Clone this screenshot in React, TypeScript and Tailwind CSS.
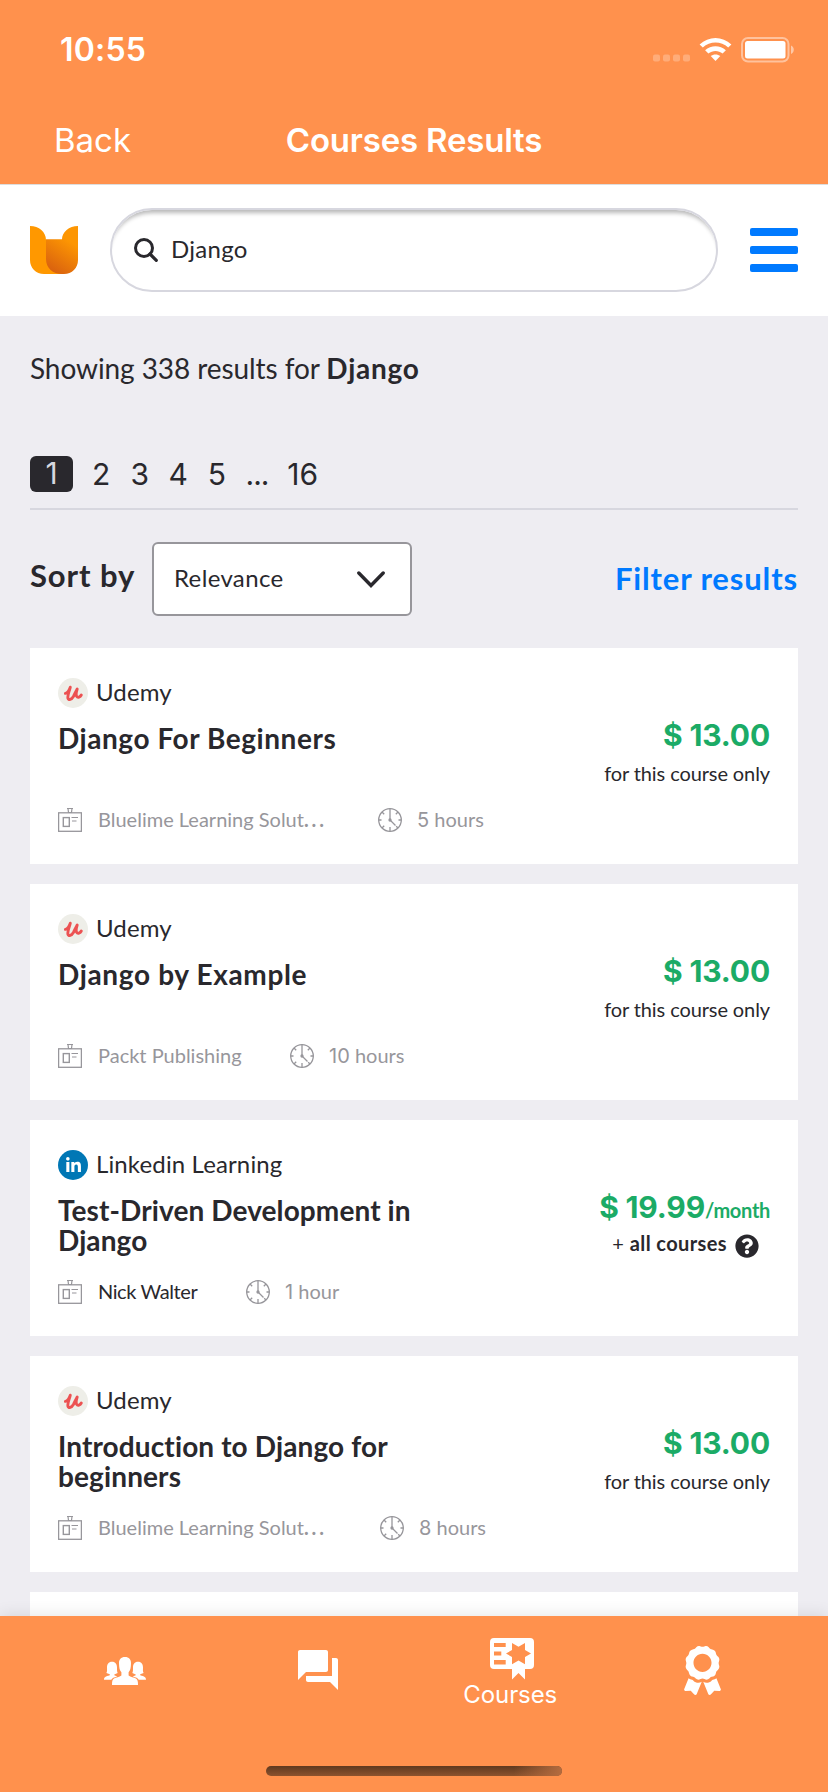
import React from "react";
import { FaAward, FaLinkedinIn, FaQuestionCircle } from "react-icons/fa";
import { MdQuestionAnswer } from "react-icons/md";

type Course = {
  provider: "Udemy" | "Linkedin Learning";
  title: string;
  titleClass: string;
  author: string;
  authorClass: string;
  truncated?: boolean;
  amount: string;
  unit: string;
  price: string;
  monthly?: boolean;
};

const courses: Course[] = [
  {
    provider: "Udemy",
    title: "Django For Beginners",
    titleClass: "tracking-[0.550px]",
    author: "Bluelime Learning Solut",
    authorClass: "w-[296px] text-[#97969b]",
    truncated: true,
    amount: "5",
    unit: "hours",
    price: "$ 13.00",
  },
  {
    provider: "Udemy",
    title: "Django by Example",
    titleClass: "tracking-[0.650px]",
    author: "Packt Publishing",
    authorClass: "w-[208px] text-[#97969b]",
    amount: "10",
    unit: "hours",
    price: "$ 13.00",
  },
  {
    provider: "Linkedin Learning",
    title: "Test-Driven Development in Django",
    titleClass: "tracking-[0.1px]",
    author: "Nick Walter",
    authorClass: "w-[164px] tracking-[-0.400px] text-[#29282d]",
    amount: "1",
    unit: "hour",
    price: "$ 19.99",
    monthly: true,
  },
  {
    provider: "Udemy",
    title: "Introduction to Django for beginners",
    titleClass: "tracking-[0.120px]",
    author: "Bluelime Learning Solut",
    authorClass: "w-[298px] text-[#97969b]",
    truncated: true,
    amount: "8",
    unit: "hours",
    price: "$ 13.00",
  },
];

function StatusIcons() {
  return (
    <svg width="142" height="26" viewBox="0 0 142 26" fill="none">
      <g fill="#fff" fillOpacity="0.25">
        <rect x="0" y="17.5" width="7" height="7" rx="2" />
        <rect x="10" y="17.5" width="7" height="7" rx="2" />
        <rect x="20" y="17.5" width="7" height="7" rx="2" />
        <rect x="30" y="17.5" width="7" height="7" rx="2" />
      </g>
      <path d="M46.600 7.500C55.500-1.200 69.500-1.200 78.400 7.500L75.200 10.600C68.100 3.900 56.900 3.900 49.800 10.600Z" fill="#fff" />
      <path d="M52.100 13.300C58 7.900 67 7.900 72.900 13.300L69.600 16.600C65.600 13.100 59.400 13.100 55.400 16.600Z" fill="#fff" />
      <path d="M57.700 19.100C60.400 16.800 64.600 16.800 67.300 19.100L62.500 24Z" fill="#fff" />
      <rect x="89" y="1" width="46.500" height="23.500" rx="6" stroke="#fff" strokeOpacity="0.45" strokeWidth="2" />
      <rect x="92" y="4" width="40.500" height="17.500" rx="2.500" fill="#fff" />
      <path d="M138 8.500C141.700 10 141.700 15.500 138 17Z" fill="#fff" fillOpacity="0.5" />
    </svg>
  );
}

function Logo() {
  return (
    <svg width="48" height="48" viewBox="0 0 48 48">
      <defs>
        <linearGradient id="cup" x1="20" y1="44" x2="42" y2="12" gradientUnits="userSpaceOnUse">
          <stop offset="0" stopColor="#d9610f" />
          <stop offset="0.9" stopColor="#fd9602" />
        </linearGradient>
      </defs>
      <path d="M0 0C9 0 16 6 16 14L34 48H14C6 48 0 42 0 34Z" fill="#ff9800" />
      <path d="M16 13.300H32C32 6 39 0 48 0V34C48 42 42 48 34 48H32C23 48 16 42 16 33Z" fill="url(#cup)" />
    </svg>
  );
}

function SearchIcon() {
  return (
    <svg width="24" height="24" viewBox="0 0 24 24" fill="none" stroke="#29282d">
      <circle cx="10" cy="10" r="8.500" strokeWidth="3" />
      <path d="M16 16L22.300 22.300" strokeWidth="3.200" strokeLinecap="round" />
    </svg>
  );
}

function UdemyMark() {
  return (
    <svg width="30" height="30" viewBox="0 0 30 30" fill="none">
      <circle cx="15" cy="15" r="15" fill="#eeeee8" />
      <path
        d="M7.400 15.400C9.600 15 11.200 12.200 12.300 9.200C11.400 13.200 9.400 17.200 9.900 20.200C10.400 22.600 13.600 21.600 15.400 18.500C16.700 16 17.800 13.500 19.200 11C18.300 13.800 17.700 16.500 18.600 18.300C19.700 20 22.300 19 23.300 17"
        stroke="#ec5252"
        strokeWidth="2.900"
        strokeLinecap="round"
        strokeLinejoin="round"
      />
    </svg>
  );
}

function LinkedinMark() {
  return (
    <span className="flex h-[30px] w-[30px] items-center justify-center rounded-full bg-[#0077b5] text-white">
      <FaLinkedinIn size={17} />
    </span>
  );
}

function BadgeIcon() {
  return (
    <svg width="24" height="24" viewBox="0 0 24 24" fill="none" stroke="#97969b">
      <rect x="0.600" y="4.800" width="22.800" height="18.500" strokeWidth="1.300" />
      <path d="M9 0.500H15M10 0.500L10.500 4.500H13.500L14 0.500" strokeWidth="1.200" />
      <rect x="5.300" y="9.600" width="6" height="8.800" strokeWidth="1.400" />
      <path d="M13.500 9.500H20M14 13H18.500" strokeWidth="1.200" />
    </svg>
  );
}

function ClockIcon() {
  return (
    <svg width="24" height="24" viewBox="0 0 24 24" fill="none" stroke="#97969b" strokeWidth="1.300">
      <circle cx="12" cy="12" r="11.300" />
      <path d="M12 0.500V12L17.500 17.500M12 19V23.500M0.500 12H3.500M20.500 12H23.500M4 4L6.200 6.200M20 4L17.800 6.200M4 20L6.200 17.800M20 20L18.200 18.200" />
      <circle cx="12" cy="12" r="1" fill="#97969b" />
    </svg>
  );
}

function PeopleIcon() {
  return (
    <svg width="42" height="28" viewBox="0 0 42 28" fill="#fff">
      <path d="M21 0C25 0 27.200 2.500 27 6.500C26.900 11 26.300 13.500 24.600 15.300V18.500C26.500 20.300 30 20.300 32 21.600C33.600 22.600 34 24.500 34 28H8C8 24.500 8.400 22.600 10 21.600C12 20.300 15.500 20.300 17.400 18.500V15.300C15.700 13.500 15.100 11 15 6.500C14.800 2.500 17 0 21 0Z" />
      <path d="M8 4.800C11.500 4.800 13 7.500 13 10.500C13 13 13 14.800 13.700 16L10.300 17.400V18.300L13.200 19.400C10 20.300 8 21 7.300 22.800H0C0 20 1.500 19.400 5.800 18.200V17.300L2.400 16C3.300 14.500 3 13 3 10.500C3 7.500 4.500 4.800 8 4.800Z" />
      <path d="M34 4.800C37.500 4.800 39 7.500 39 10.500C39 13 38.700 14.500 39.600 16L36.200 17.300V18.200C40.500 19.400 42 20 42 22.800H34.700C34 21 32 20.300 28.800 19.400L31.700 18.300V17.400L28.300 16C29 14.800 29 13 29 10.500C29 7.500 30.500 4.800 34 4.800Z" />
    </svg>
  );
}

function CertificateIcon() {
  return (
    <svg width="44" height="42" viewBox="0 0 44 42" fill="#fff" fillRule="evenodd">
      <path d="M4 0H40Q44 0 44 4V27Q44 31 40 31H35V41.500L28.500 35L22 41.500V31H4Q0 31 0 27V4Q0 0 4 0ZM4 5V9H15.700V5ZM4 13.500V17.500H11.300V13.500ZM4 22V26.500H15.700V22ZM22 5V12L16 15.500L22 19V26.300L28.500 22.500L35 26.300V19L41 15.500L35 12V5L28.500 8.800Z" />
    </svg>
  );
}

function CourseCard({ course }: { course: Course }) {
  return (
    <article className="flex h-[216px] shrink-0 justify-between bg-white px-7">
      <div className="pt-[30px]">
        <div className="flex h-[30px] items-center gap-2">
          {course.provider === "Udemy" ? <UdemyMark /> : <LinkedinMark />}
          <span className="pb-[3px] text-2xl leading-[30px] tracking-[0.130px]">{course.provider}</span>
        </div>
        <h2 className={"mt-[15px] h-[60px] w-[390px] text-[28px] leading-[30px] font-bold " + course.titleClass}>
          {course.title}
        </h2>
        <div className="mt-[25px] flex h-6 items-center text-xl leading-6 text-[#97969b]">
          <BadgeIcon />
          <span className={"pb-[2px] pl-4 whitespace-nowrap " + course.authorClass}>
            {course.author}
            {course.truncated && <span className="font-bold tracking-[2.900px]">...</span>}
          </span>
          <ClockIcon />
          <span className="pb-[2px] pl-[15px]">
            <span className="font-['Inter',sans-serif]">{course.amount}</span> {course.unit}
          </span>
        </div>
      </div>
      <div className="flex flex-col items-end pt-[69px]">
        <div className="flex items-baseline leading-9 font-bold text-[#1bab66]">
          <span className="font-['Inter',sans-serif] text-[30px] tracking-[-0.150px]">{course.price}</span>
          {course.monthly && <span className="text-xl leading-6 tracking-[-0.300px]">/month</span>}
        </div>
        {course.monthly ? (
          <div className="mt-[9px] flex h-6 items-center gap-2 pr-[11px] text-xl leading-6">
            <span className="pb-[6px] tracking-[0.400px]">
              + <b>all courses</b>
            </span>
            <FaQuestionCircle size={24} />
          </div>
        ) : (
          <div className="mt-2 text-xl leading-6 tracking-[-0.100px]">for this course only</div>
        )}
      </div>
    </article>
  );
}

export default function App() {
  return (
    <div className="flex h-[1792px] w-[828px] flex-col overflow-hidden bg-[#eeedf2] font-['Lato',sans-serif] text-[#29282d]">
      <header className="h-[184px] shrink-0 bg-[#ff914d] font-['Inter',sans-serif] text-white">
        <div className="flex h-[99px] items-center justify-between pr-[33px] pl-[60px]">
          <span className="pt-px text-[32px] font-semibold tracking-[0.200px]">10:55</span>
          <StatusIcons />
        </div>
        <div className="grid h-[84px] grid-cols-3 items-center">
          <span className="pl-[54px] text-[33px]">Back</span>
          <h1 className="text-center text-[33px] font-semibold tracking-[-0.200px] whitespace-nowrap">Courses Results</h1>
        </div>
      </header>

      <div className="flex h-[132px] shrink-0 items-center border-t border-[#dddddd] bg-white px-[30px] pb-px">
        <Logo />
        <div className="ml-8 flex h-[84px] w-[608px] items-center rounded-full border-2 border-[#d7d7df] bg-white pl-[22px] shadow-[inset_0_7px_4px_-4px_rgba(0,0,0,0.28)]">
          <SearchIcon />
          <span className="pb-[2px] pl-[13px] text-2xl tracking-[0.270px]">Django</span>
        </div>
        <button aria-label="Menu" className="ml-8 flex w-12 flex-col gap-[10px]">
          <span className="h-2 rounded-[2px] bg-[#007aff]" />
          <span className="h-2 rounded-[2px] bg-[#007aff]" />
          <span className="h-2 rounded-[2px] bg-[#007aff]" />
        </button>
      </div>

      <main className="flex min-h-0 flex-1 flex-col overflow-hidden px-[30px] pt-8">
        <p className="h-10 shrink-0 text-[28px] leading-10 tracking-[-0.080px]">
          Showing 338 results for <b className="tracking-[0.750px]">Django</b>
        </p>
        <nav className="mt-[68px] flex shrink-0 items-center border-b-2 border-[#d7d7df] pb-4 text-center font-['Inter',sans-serif] text-[30px] leading-[35px]">
          <span className="mr-[9px] h-9 w-[43px] rounded-md bg-[#29282d] text-[#d7d7df]">1</span>
          <span className="w-[38.500px]">2</span>
          <span className="w-[38.500px]">3</span>
          <span className="w-[38.500px]">4</span>
          <span className="w-[38.500px]">5</span>
          <span className="w-[42px] tracking-[-1px]">...</span>
          <span className="w-[49.500px]">16</span>
        </nav>
        <div className="mt-8 flex h-[74px] shrink-0 items-center">
          <span className="w-[122px] pb-2 text-[31px] font-bold tracking-[0.900px]">Sort by</span>
          <div className="flex h-[74px] w-[260px] items-center justify-between rounded-md border-2 border-[#97969b] bg-white pr-[25px] pl-5">
            <span className="pb-[2px] text-2xl tracking-[0.350px]">Relevance</span>
            <svg width="28" height="17" viewBox="0 0 28 17" fill="none">
              <path d="M1.800 2L14 14.500L26.200 2" stroke="#29282d" strokeWidth="3.400" strokeLinecap="round" />
            </svg>
          </div>
          <a className="ml-auto pb-[2px] text-[31px] font-bold tracking-[0.850px] text-[#007aff]">Filter results</a>
        </div>
        <section className="mt-8 flex flex-col gap-5">
          {courses.map((course) => (
            <CourseCard key={course.title} course={course} />
          ))}
          <article className="h-[216px] shrink-0 bg-white" />
        </section>
      </main>

      <footer className="z-10 flex h-[176px] shrink-0 flex-col items-center justify-between bg-[#ff914d] pb-4 font-['Inter',sans-serif] text-white shadow-[0_0_16px_rgba(0,0,0,0.12)]">
        <div className="grid h-[110px] w-full grid-cols-4 justify-items-center px-[29px]">
          <div className="pt-[41px]">
            <PeopleIcon />
          </div>
          <div className="pt-[30px]">
            <MdQuestionAnswer size={48} />
          </div>
          <div className="flex flex-col items-center pt-[22px] text-2xl">
            <div className="pl-[3px]">
              <CertificateIcon />
            </div>
            <span className="leading-[30px] tracking-[-0.100px]">Courses</span>
          </div>
          <div className="pt-[30px]">
            <FaAward size={49} />
          </div>
        </div>
        <div className="h-[10px] w-[296px] overflow-hidden rounded-full bg-gradient-to-b from-[#60391f] to-[#8b522e]">
          <div className="ml-auto h-full w-12 bg-gradient-to-r from-transparent to-[#b56c3f]" />
        </div>
      </footer>
    </div>
  );
}
